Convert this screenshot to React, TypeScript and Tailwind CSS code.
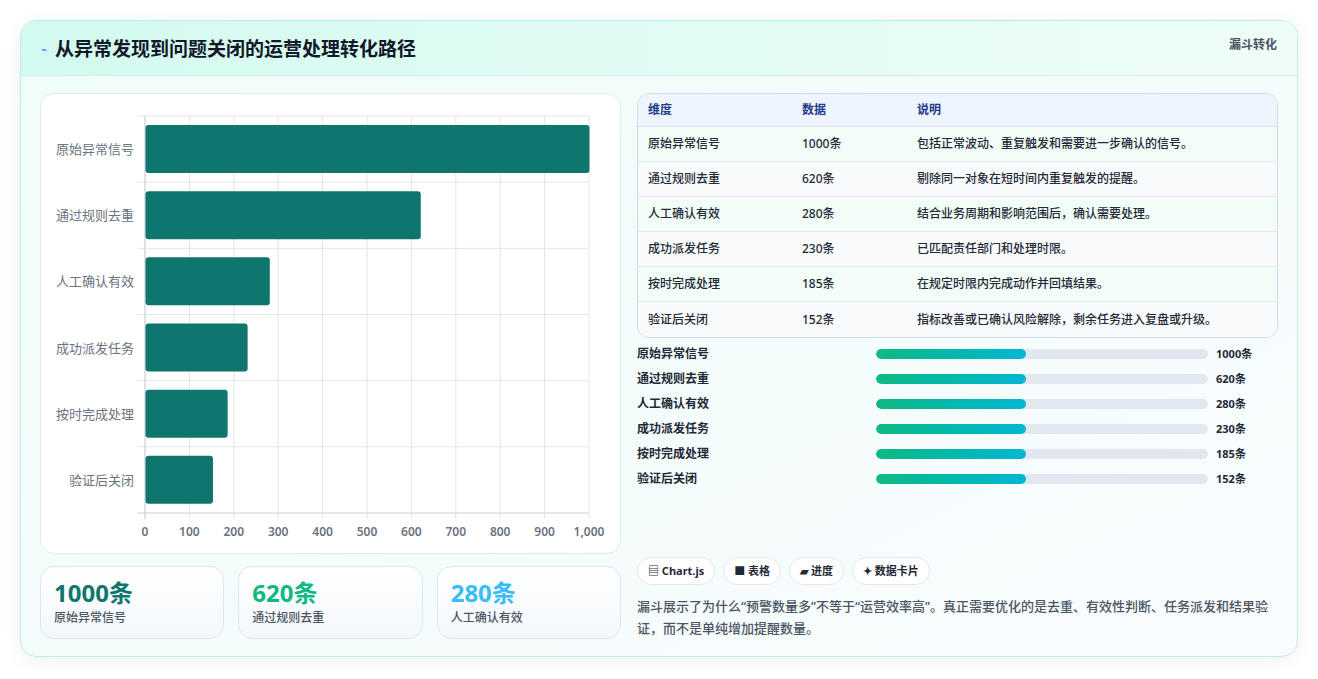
const rows = [
  { n: "原始异常信号", v: 1000, d: "包括正常波动、重复触发和需要进一步确认的信号。" },
  { n: "通过规则去重", v: 620, d: "剔除同一对象在短时间内重复触发的提醒。" },
  { n: "人工确认有效", v: 280, d: "结合业务周期和影响范围后，确认需要处理。" },
  { n: "成功派发任务", v: 230, d: "已匹配责任部门和处理时限。" },
  { n: "按时完成处理", v: 185, d: "在规定时限内完成动作并回填结果。" },
  { n: "验证后关闭", v: 152, d: "指标改善或已确认风险解除，剩余任务进入复盘或升级。" },
];

function Chart() {
  const L = 104, R = 548, T = 22, B = 419;
  const rh = (B - T) / 6;
  const ticks = [0, 100, 200, 300, 400, 500, 600, 700, 800, 900, 1000];
  return (
    <svg width="580" height="458" className="block">
      {ticks.map((t) => {
        const x = L + ((R - L) * t) / 1000;
        return <line key={t} x1={x} x2={x} y1={T} y2={B + 6} stroke="#e2e5ea" />;
      })}
      {Array.from({ length: 7 }).map((_, i) => (
        <line key={i} x1={L - 8} x2={R} y1={T + rh * i} y2={T + rh * i} stroke={i === 6 ? "#cbd0d8" : "#e2e5ea"} />
      ))}
      <line x1={L} x2={L} y1={T} y2={B + 6} stroke="#cbd0d8" />
      {rows.map((r, i) => {
        const y = T + rh * i + 9;
        return (
          <g key={r.n}>
            <rect x={L + 0.5} y={y} width={((R - L) * r.v) / 1000} height={48} rx={3} fill="#0f766e" />
            <text x={93} y={y + 29} textAnchor="end" fontSize="13" fill="#6b7280" fontFamily="'Noto Sans CJK SC', sans-serif">{r.n}</text>
          </g>
        );
      })}
      {ticks.map((t) => (
        <text key={t} x={L + ((R - L) * t) / 1000} y={442} textAnchor="middle" fontSize="12" fontWeight="600" fill="#6b7280" fontFamily="'Noto Sans', sans-serif">
          {t === 1000 ? "1,000" : t}
        </text>
      ))}
    </svg>
  );
}

export default function App() {
  return (
    <div className="w-[1318px] h-[679px] bg-white p-[20px] pb-0" style={{ fontFamily: "'Noto Sans', 'Noto Sans CJK SC', sans-serif" }}>
      <div className="h-[637px] rounded-[16px] border border-[#b9efe4] overflow-hidden shadow-[0_4px_20px_rgba(0,0,0,0.06)] bg-gradient-to-br from-[#effdf8] to-[#f9fcff]">
        <div className="h-[55px] border-b border-[#d4efe8] bg-gradient-to-r from-[#d3faf0] to-[#eefdf7] flex items-start justify-between px-[20px] pt-[14px]">
          <div className="flex items-center gap-[8px]">
            <span className="text-[10px] text-[#3b82f6]">⌁</span>
            <span className="text-[19px] font-bold text-[#111827]">从异常发现到问题关闭的运营处理转化路径</span>
          </div>
          <span className="text-[12px] font-bold text-[#4b5563] pt-[1px]">漏斗转化</span>
        </div>
        <div className="flex gap-[16px] px-[19px] pt-[17px]">
          <div className="w-[581px] flex flex-col gap-[12px]">
            <div className="h-[461px] bg-white rounded-[14px] border border-[#e3e8ef]">
              <Chart />
            </div>
            <div className="grid grid-cols-3 gap-[14px]">
              {[
                ["1000条", "原始异常信号", "text-[#0f766e]"],
                ["620条", "通过规则去重", "text-[#10b981]"],
                ["280条", "人工确认有效", "text-[#38bdf8]"],
              ].map(([v, l, c]) => (
                <div key={l} className="h-[73px] rounded-[14px] border border-[#dbe7f3] bg-gradient-to-b from-white to-[#f4f8fc] px-[13px] pt-[10px]">
                  <div className={`text-[24px] leading-[32px] font-bold ${c}`}>{v}</div>
                  <div className="text-[12px] text-[#4b5563] font-medium">{l}</div>
                </div>
              ))}
            </div>
          </div>
          <div className="flex-1 flex flex-col">
            <div className="rounded-[12px] border border-[#cfdde8] overflow-hidden bg-white text-[12px]">
              <div className="flex h-[33px] items-center bg-[#eef5ff] border-b border-[#d9e3ee] text-[#1e3a8a] font-bold">
                <div className="w-[164px] pl-[10px]">维度</div>
                <div className="w-[115px]">数据</div>
                <div>说明</div>
              </div>
              {rows.map((r, i) => (
                <div key={r.n} className={`flex h-[35px] items-center text-[#1f2937] font-medium ${i < 5 ? "border-b border-[#e5eaf0]" : ""} ${i % 2 === 0 ? "bg-[#f2fdf8]" : "bg-[#f9fafc]"}`}>
                  <div className="w-[164px] pl-[10px]">{r.n}</div>
                  <div className="w-[115px]">{r.v}条</div>
                  <div>{r.d}</div>
                </div>
              ))}
            </div>
            <div className="flex flex-col mt-[7px] gap-[7px]">
              {rows.map((r) => (
                <div key={r.n} className="flex items-center h-[18px] text-[12px] font-bold text-[#1f2937]">
                  <div className="w-[239px]">{r.n}</div>
                  <div className="w-[332px] h-[10px] rounded-full bg-[#e2e8f0] overflow-hidden">
                    <div className="h-full w-[150px] rounded-full bg-gradient-to-r from-[#10b981] to-[#06b6d4]" />
                  </div>
                  <div className="pl-[8px] text-[11px]">{r.v}条</div>
                </div>
              ))}
            </div>
            <div className="flex gap-[8px] mt-[69px]">
              {["▤ Chart.js", "■ 表格", "▰ 进度", "✦ 数据卡片"].map((c) => (
                <span key={c} className="h-[28px] px-[10px] flex items-center rounded-full border border-[#e5e7eb] bg-white text-[11px] font-bold text-[#1f2937]">{c}</span>
              ))}
            </div>
            <p className="mt-[10px] text-[13px] leading-[22px] text-[#4b5563] font-medium">
              漏斗展示了为什么“预警数量多”不等于“运营效率高”。真正需要优化的是去重、有效性判断、任务派发和结果验证，而不是单纯增加提醒数量。
            </p>
          </div>
        </div>
      </div>
    </div>
  );
}
